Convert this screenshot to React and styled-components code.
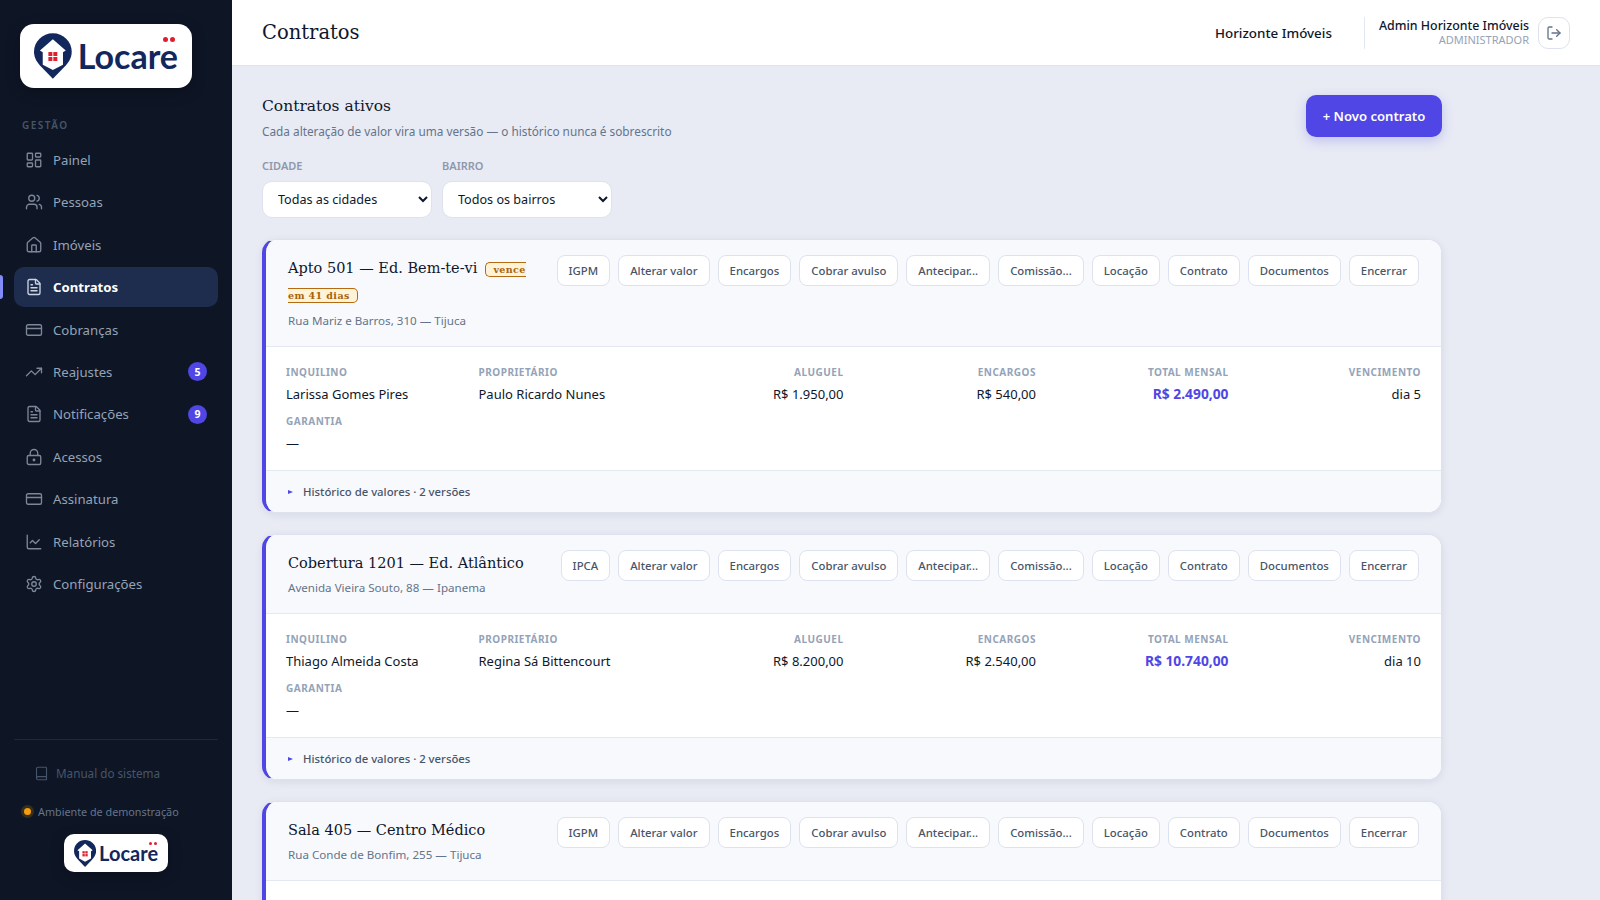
import React from 'react';
import styled, { createGlobalStyle } from 'styled-components';
import {
  LayoutDashboard, Users, Home, FileText, CreditCard, TrendingUp, LockKeyhole,
  ChartLine, Settings, Book, LogOut,
} from 'lucide-react';

const GlobalStyle = createGlobalStyle`
  * { box-sizing: border-box; }
  html, body { margin: 0; height: 100%; overflow: hidden; }
  body { font-family: "Noto Sans", "Open Sans", sans-serif; color: #0f172a; background: #e8ebf4; }
`;

const SERIF = '"DejaVu Serif", "Liberation Serif", serif';

const Shell = styled.div`
  display: flex;
  height: 100vh;
`;

const Sidebar = styled.aside`
  width: 232px;
  flex: none;
  background: #0e1525;
  display: flex;
  flex-direction: column;
  padding: 24px 14px 0;
`;

const LogoBox = styled.div`
  align-self: ${(p) => (p.$small ? 'center' : 'flex-start')};
  display: flex;
  align-items: center;
  justify-content: center;
  gap: ${(p) => (p.$small ? 3 : 6)}px;
  background: #fff;
  border-radius: ${(p) => (p.$small ? 10 : 14)}px;
  width: ${(p) => (p.$small ? 104 : 172)}px;
  height: ${(p) => (p.$small ? 38 : 64)}px;
  margin-left: ${(p) => (p.$small ? 0 : 6)}px;
  box-shadow: 0 4px 14px rgba(0, 0, 0, 0.25);
`;

const LogoWord = styled.span`
  position: relative;
  font-family: Lato, "Noto Sans", sans-serif;
  font-weight: 700;
  font-size: ${(p) => (p.$small ? 20 : 34)}px;
  line-height: 1;
  color: #12275c;
`;

const LogoDots = styled.span`
  position: absolute;
  right: ${(p) => (p.$small ? 1.5 : 3)}px;
  top: ${(p) => (p.$small ? -1 : -2)}px;
  display: flex;
  gap: ${(p) => (p.$small ? 1.5 : 2)}px;

  i {
    display: block;
    width: ${(p) => (p.$small ? 3 : 5)}px;
    height: ${(p) => (p.$small ? 3 : 5)}px;
    border-radius: 50%;
    background: #e11d2e;
  }
`;

function Logo({ small }) {
  const h = small ? 27 : 46;
  return (
    <LogoBox $small={small}>
      <svg width={h * 0.82} height={h} viewBox="0 0 38 46">
        <path d="M19 0C8.5 0 0 8.3 0 18.6c0 6.6 3.4 11 7.5 15.4L19 46l11.5-12C34.6 29.6 38 25.2 38 18.6 38 8.3 29.5 0 19 0z" fill="#12275c" />
        <path d="M19 6L6 17.5l2.8 1.8v12.4L19 37l10.2-5.3V19.3l2.8-1.8z" fill="#fff" />
        <rect x="14.5" y="19" width="4" height="4" fill="#e11d2e" />
        <rect x="19.5" y="19" width="4" height="4" fill="#e11d2e" />
        <rect x="14.5" y="24" width="4" height="4" fill="#e11d2e" />
        <rect x="19.5" y="24" width="4" height="4" fill="#e11d2e" />
      </svg>
      <LogoWord $small={small}>
        Locare
        <LogoDots $small={small}><i /><i /></LogoDots>
      </LogoWord>
    </LogoBox>
  );
}

const SectionLabel = styled.div`
  font-size: 10px;
  font-weight: 600;
  letter-spacing: 1.5px;
  color: #475569;
  margin: 30px 0 8px 8px;
`;

const Nav = styled.nav`
  display: flex;
  flex-direction: column;
  gap: 2.4px;
`;

const NavItem = styled.a`
  position: relative;
  display: flex;
  align-items: center;
  gap: 10px;
  height: 40px;
  padding: 0 11px;
  border-radius: 10px;
  font-size: 13.2px;
  font-weight: ${(p) => (p.$active ? 700 : 400)};
  color: ${(p) => (p.$active ? '#fff' : '#94a3b8')};
  background: ${(p) => (p.$active ? '#1e2d4d' : 'transparent')};

  svg {
    flex: none;
    color: ${(p) => (p.$active ? '#cbd5e1' : '#7c8798')};
  }

  ${(p) => p.$active && `
    &::before {
      content: '';
      position: absolute;
      left: -14px;
      top: 8px;
      bottom: 8px;
      width: 3px;
      border-radius: 0 3px 3px 0;
      background: #818cf8;
    }
  `}
`;

const NavBadge = styled.span`
  margin-left: auto;
  width: 19px;
  height: 19px;
  border-radius: 50%;
  background: #4f46e5;
  color: #fff;
  font-size: 10.5px;
  font-weight: 700;
  display: flex;
  align-items: center;
  justify-content: center;
`;

const SideFooter = styled.div`
  margin-top: auto;
  border-top: 1px solid #1e293b;
  padding: 24px 0 28px;
  display: flex;
  flex-direction: column;
`;

const ManualLink = styled.a`
  display: flex;
  align-items: center;
  gap: 7px;
  padding-left: 20px;
  font-size: 11.7px;
  line-height: 18px;
  color: #475569;
`;

const DemoRow = styled.div`
  display: flex;
  align-items: center;
  gap: 7px;
  margin: 22px 0 15px 10px;
  font-size: 10.8px;
  color: #64748b;
`;

const DemoDot = styled.span`
  width: 7px;
  height: 7px;
  border-radius: 50%;
  background: #f59e0b;
  box-shadow: 0 0 0 3px rgba(245, 158, 11, 0.18);
`;

const Main = styled.div`
  flex: 1;
  min-width: 0;
  display: flex;
  flex-direction: column;
`;

const Header = styled.header`
  height: 66px;
  flex: none;
  background: #fff;
  border-bottom: 1px solid #dfe3ee;
  padding: 0 30px;
  display: flex;
  align-items: center;
`;

const PageTitle = styled.h1`
  font-family: ${SERIF};
  font-weight: 400;
  font-size: 19.5px;
  margin: 0;
  color: #0f172a;
`;

const OrgName = styled.span`
  margin-left: auto;
  font-size: 13.4px;
  font-weight: 500;
  padding-right: 32px;
`;

const UserBlock = styled.div`
  border-left: 1px solid #e2e8f0;
  height: 32px;
  padding-left: 14px;
  display: flex;
  flex-direction: column;
  justify-content: center;
  align-items: flex-end;
  line-height: 1.1;
`;

const UserName = styled.span`
  font-size: 12.4px;
  font-weight: 500;
`;

const UserRole = styled.span`
  font-size: 11px;
  color: #94a3b8;
  margin-top: 1px;
`;

const LogoutButton = styled.button`
  width: 32px;
  height: 32px;
  margin-left: 9px;
  border: 1px solid #dde2ee;
  border-radius: 10px;
  background: #fff;
  color: #64748b;
  display: flex;
  align-items: center;
  justify-content: center;
  padding: 0;
`;

const Content = styled.main`
  flex: 1;
  overflow: hidden;
  padding: 29px 30px;
`;

const Wrap = styled.div`
  width: 1180px;
`;

const TopRow = styled.div`
  display: flex;
  justify-content: space-between;
  align-items: flex-start;
`;

const SectionTitle = styled.h2`
  font-family: ${SERIF};
  font-weight: 400;
  font-size: 15.5px;
  line-height: 22px;
  margin: 0;
`;

const SectionSub = styled.p`
  margin: 5px 0 0;
  font-size: 11.8px;
  line-height: 18px;
  color: #64748b;
`;

const PrimaryButton = styled.button`
  height: 42px;
  width: 136px;
  border: 0;
  border-radius: 10px;
  background: #4f46e5;
  color: #fff;
  font-family: inherit;
  font-size: 13.1px;
  font-weight: 600;
  box-shadow: 0 4px 12px rgba(79, 70, 229, 0.25);
`;

const Filters = styled.div`
  display: flex;
  gap: 10px;
  margin-top: 18px;
`;

const Filter = styled.label`
  display: flex;
  flex-direction: column;
  gap: 8px;
  font-size: 11px;
  font-weight: 600;
  color: #8f98ab;
`;

const Select = styled.select`
  width: 170px;
  height: 37px;
  padding: 0 11px;
  border: 1px solid #dde2ee;
  border-radius: 10px;
  background: #fff;
  color: #0f172a;
  font-family: inherit;
  font-size: 12.6px;
`;

const Card = styled.article`
  margin-top: ${(p) => (p.$first ? 21 : 21)}px;
  background: #fff;
  border: 1px solid #dde2ee;
  border-left: 4px solid #4f46e5;
  border-radius: 14px;
  overflow: hidden;
  box-shadow: 0 2px 8px rgba(15, 23, 42, 0.08);
`;

const CardHead = styled.div`
  background: #f8f9fd;
  border-bottom: 1px solid #e5e8f1;
  padding: 15px 22px 16px 22px;
  display: flex;
  justify-content: space-between;
  gap: 16px;
`;

const TitleCol = styled.div`
  flex: 1;
  min-width: 0;
  padding-top: 1px;
`;

const CardTitle = styled.h3`
  font-family: ${SERIF};
  font-weight: 400;
  font-size: 14.5px;
  line-height: 24px;
  margin: 0;
`;

const DueBadge = styled.span`
  margin-left: 8px;
  padding: 1px 7px;
  font-size: 9.5px;
  font-weight: 700;
  letter-spacing: 0.4px;
  color: #a8620a;
  background: #fef3d7;
  border: 1px solid #b46a10;
  border-radius: 5px;
`;

const Address = styled.div`
  font-size: 11.6px;
  line-height: 18px;
  margin-top: 4px;
  color: #64748b;
`;

const Actions = styled.div`
  display: flex;
  flex: none;
  gap: 8px;
  align-items: flex-start;
`;

const ActionButton = styled.button`
  height: 31px;
  padding: 0 11px;
  border: 1px solid #dde2ee;
  border-radius: 8px;
  background: #fff;
  color: #475569;
  font-family: inherit;
  font-size: 11.35px;
  font-weight: 500;
  white-space: nowrap;
`;

const Fields = styled.div`
  display: grid;
  grid-template-columns: repeat(6, 1fr);
  column-gap: 20px;
  row-gap: 9px;
  padding: 17px 20px 17px;
`;

const Field = styled.div`
  text-align: ${(p) => (p.$right ? 'right' : 'left')};
`;

const FieldLabel = styled.div`
  font-size: 10px;
  font-weight: 700;
  letter-spacing: 0.5px;
  line-height: 16px;
  color: #94a3b8;
`;

const FieldValue = styled.div`
  font-size: ${(p) => (p.$accent ? 13.8 : 13)}px;
  line-height: 20px;
  margin-top: 4px;
  font-weight: ${(p) => (p.$accent ? 700 : 400)};
  color: ${(p) => (p.$accent ? '#4f46e5' : '#0f172a')};
`;

const History = styled.div`
  background: #f8f9fd;
  border-top: 1px solid #e5e8f1;
  height: 42px;
  padding: 0 22px;
  display: flex;
  align-items: center;
  gap: 10px;
  font-size: 11.35px;
  font-weight: 500;
  color: #475569;
`;

const Arrow = styled.span`
  width: 0;
  height: 0;
  border-left: 5px solid #4f46e5;
  border-top: 2.5px solid transparent;
  border-bottom: 2.5px solid transparent;
`;

const menu = [
  ['Painel', LayoutDashboard],
  ['Pessoas', Users],
  ['Imóveis', Home],
  ['Contratos', FileText],
  ['Cobranças', CreditCard],
  ['Reajustes', TrendingUp, 5],
  ['Notificações', FileText, 9],
  ['Acessos', LockKeyhole],
  ['Assinatura', CreditCard],
  ['Relatórios', ChartLine],
  ['Configurações', Settings],
];

const contracts = [
  {
    title: 'Apto 501 — Ed. Bem-te-vi',
    due: 'vence em 41 dias',
    address: 'Rua Mariz e Barros, 310 — Tijuca',
    index: 'IGPM',
    tenant: 'Larissa Gomes Pires',
    owner: 'Paulo Ricardo Nunes',
    rent: 'R$ 1.950,00',
    fees: 'R$ 540,00',
    total: 'R$ 2.490,00',
    day: 'dia 5',
  },
  {
    title: 'Cobertura 1201 — Ed. Atlântico',
    address: 'Avenida Vieira Souto, 88 — Ipanema',
    index: 'IPCA',
    tenant: 'Thiago Almeida Costa',
    owner: 'Regina Sá Bittencourt',
    rent: 'R$ 8.200,00',
    fees: 'R$ 2.540,00',
    total: 'R$ 10.740,00',
    day: 'dia 10',
  },
  {
    title: 'Sala 405 — Centro Médico',
    address: 'Rua Conde de Bonfim, 255 — Tijuca',
    index: 'IGPM',
    tenant: '—',
    owner: '—',
    rent: '—',
    fees: '—',
    total: '—',
    day: '—',
  },
];

const actions = ['Alterar valor', 'Encargos', 'Cobrar avulso', 'Antecipar...', 'Comissão...', 'Locação', 'Contrato', 'Documentos', 'Encerrar'];

function ContractCard({ contract }) {
  return (
    <Card>
      <CardHead>
        <TitleCol>
          <CardTitle>
            {contract.title}
            {contract.due && <DueBadge>{contract.due}</DueBadge>}
          </CardTitle>
          <Address>{contract.address}</Address>
        </TitleCol>
        <Actions>
          <ActionButton>{contract.index}</ActionButton>
          {actions.map((a) => <ActionButton key={a}>{a}</ActionButton>)}
        </Actions>
      </CardHead>
      <Fields>
        <Field><FieldLabel>INQUILINO</FieldLabel><FieldValue>{contract.tenant}</FieldValue></Field>
        <Field><FieldLabel>PROPRIETÁRIO</FieldLabel><FieldValue>{contract.owner}</FieldValue></Field>
        <Field $right><FieldLabel>ALUGUEL</FieldLabel><FieldValue>{contract.rent}</FieldValue></Field>
        <Field $right><FieldLabel>ENCARGOS</FieldLabel><FieldValue>{contract.fees}</FieldValue></Field>
        <Field $right><FieldLabel>TOTAL MENSAL</FieldLabel><FieldValue $accent>{contract.total}</FieldValue></Field>
        <Field $right><FieldLabel>VENCIMENTO</FieldLabel><FieldValue>{contract.day}</FieldValue></Field>
        <Field><FieldLabel>GARANTIA</FieldLabel><FieldValue>—</FieldValue></Field>
      </Fields>
      <History><Arrow />Histórico de valores · 2 versões</History>
    </Card>
  );
}

export default function App() {
  return (
    <Shell>
      <GlobalStyle />
      <Sidebar>
        <Logo />
        <SectionLabel>GESTÃO</SectionLabel>
        <Nav>
          {menu.map(([label, Icon, badge]) => (
            <NavItem key={label} $active={label === 'Contratos'}>
              <Icon size={18} strokeWidth={1.8} />
              {label}
              {badge && <NavBadge>{badge}</NavBadge>}
            </NavItem>
          ))}
        </Nav>
        <SideFooter>
          <ManualLink><Book size={15} strokeWidth={1.8} />Manual do sistema</ManualLink>
          <DemoRow><DemoDot />Ambiente de demonstração</DemoRow>
          <Logo small />
        </SideFooter>
      </Sidebar>
      <Main>
        <Header>
          <PageTitle>Contratos</PageTitle>
          <OrgName>Horizonte Imóveis</OrgName>
          <UserBlock>
            <UserName>Admin Horizonte Imóveis</UserName>
            <UserRole>ADMINISTRADOR</UserRole>
          </UserBlock>
          <LogoutButton><LogOut size={16} strokeWidth={2} /></LogoutButton>
        </Header>
        <Content>
          <Wrap>
            <TopRow>
              <div>
                <SectionTitle>Contratos ativos</SectionTitle>
                <SectionSub>Cada alteração de valor vira uma versão — o histórico nunca é sobrescrito</SectionSub>
              </div>
              <PrimaryButton>+ Novo contrato</PrimaryButton>
            </TopRow>
            <Filters>
              <Filter>CIDADE<Select><option>Todas as cidades</option></Select></Filter>
              <Filter>BAIRRO<Select><option>Todos os bairros</option></Select></Filter>
            </Filters>
            {contracts.map((c) => <ContractCard key={c.title} contract={c} />)}
          </Wrap>
        </Content>
      </Main>
    </Shell>
  );
}
